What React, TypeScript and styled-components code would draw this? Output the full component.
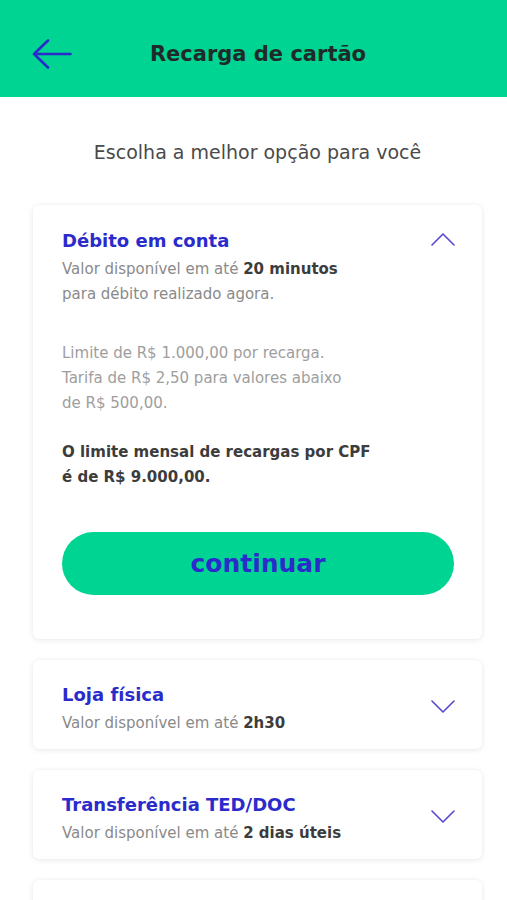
import styled, { createGlobalStyle } from 'styled-components';

const GREEN = '#00d492';
const BLUE = '#2b2bcc';
const CHEVRON = '#5548d0';

const GlobalStyle = createGlobalStyle`
  html, body { margin: 0; padding: 0; background: #ffffff; }
  body { font-family: "DejaVu Sans", "Open Sans", sans-serif; }
  * { box-sizing: border-box; }
`;

interface Option {
  title: string;
  lead: string;
  highlight: string;
}

const COLLAPSED: Option[] = [
  { title: 'Loja física', lead: 'Valor disponível em até ', highlight: '2h30' },
  { title: 'Transferência TED/DOC', lead: 'Valor disponível em até ', highlight: '2 dias úteis' },
];

function Chevron({ up }: { up?: boolean }) {
  return (
    <ChevronIcon viewBox="0 0 24 13" width="24" height="13" aria-hidden="true">
      <path
        d={up ? 'M1 12 L12 1 L23 12' : 'M1 1 L12 12 L23 1'}
        fill="none"
        stroke={CHEVRON}
        strokeWidth="1.6"
        strokeLinecap="round"
        strokeLinejoin="round"
      />
    </ChevronIcon>
  );
}

export default function App() {
  return (
    <>
      <GlobalStyle />
      <Page>
        <Header>
          <BackButton aria-label="Voltar">
            <svg viewBox="0 0 40 30" width="40" height="30" aria-hidden="true">
              <path
                d="M38.5 15 H2 M16 1.5 L2 15 L16 28.5"
                fill="none"
                stroke={BLUE}
                strokeWidth="2.6"
                strokeLinecap="round"
                strokeLinejoin="round"
              />
            </svg>
          </BackButton>
          <HeaderTitle>Recarga de cartão</HeaderTitle>
        </Header>

        <Subtitle>Escolha a melhor opção para você</Subtitle>

        <List>
          <Card $expanded>
            <CardHead>
              <div>
                <OptionTitle>Débito em conta</OptionTitle>
                <Detail>
                  Valor disponível em até <strong>20 minutos</strong>
                  <br />
                  para débito realizado agora.
                </Detail>
              </div>
              <Chevron up />
            </CardHead>

            <Note>
              Limite de R$ 1.000,00 por recarga.
              <br />
              Tarifa de R$ 2,50 para valores abaixo
              <br />
              de R$ 500,00.
            </Note>

            <Strong>
              O limite mensal de recargas por CPF
              <br />
              é de R$ 9.000,00.
            </Strong>

            <ContinueButton>continuar</ContinueButton>
          </Card>

          {COLLAPSED.map(o => (
            <Card key={o.title}>
              <CardHead $center>
                <div>
                  <OptionTitle>{o.title}</OptionTitle>
                  <Detail>
                    {o.lead}
                    <strong>{o.highlight}</strong>
                  </Detail>
                </div>
                <Chevron />
              </CardHead>
            </Card>
          ))}

          <Card />
        </List>
      </Page>
    </>
  );
}

// ─── Styles ──────────────────────────────────────────────────────────────

const Page = styled.div`
  width: 507px;
  height: 900px;
  overflow: hidden;
  background: #ffffff;
`;

const Header = styled.header`
  height: 97px;
  background: ${GREEN};
  display: flex;
  align-items: center;
  position: relative;
  padding: 12px 0 0 32px;
`;

const BackButton = styled.button`
  background: none;
  border: none;
  padding: 0;
  display: flex;
  cursor: pointer;
  margin-top: -1px;
`;

const HeaderTitle = styled.h1`
  position: absolute;
  left: 9px;
  right: 0;
  top: 40px;
  text-align: center;
  margin: 0;
  font-size: 21px;
  line-height: 28px;
  font-weight: 700;
  color: #1f2b29;
  pointer-events: none;
`;

const Subtitle = styled.p`
  margin: 0;
  padding: 41px 0 39px 8px;
  text-align: center;
  font-size: 19px;
  line-height: 28px;
  color: #4a4a4a;
`;

const List = styled.div`
  display: flex;
  flex-direction: column;
  gap: 21px;
  padding: 0 25px 0 33px;
`;

const Card = styled.section<{ $expanded?: boolean }>`
  background: #ffffff;
  border-radius: 6px;
  box-shadow: 0 1px 6px rgba(0, 0, 0, 0.09), 0 0 2px rgba(0, 0, 0, 0.04);
  padding: ${p => (p.$expanded ? '24px 27px 44px 29px' : '23px 27px 13px 29px')};
  min-height: 89px;
  display: flex;
  flex-direction: column;
`;

const CardHead = styled.div<{ $center?: boolean }>`
  display: flex;
  justify-content: space-between;
  align-items: ${p => (p.$center ? 'center' : 'flex-start')};

  & > svg {
    margin-top: ${p => (p.$center ? '0' : '4px')};
    margin-bottom: ${p => (p.$center ? '7px' : '0')};
  }
`;

const ChevronIcon = styled.svg`
  flex-shrink: 0;
`;

const OptionTitle = styled.h2`
  margin: 0 0 4px;
  font-size: 18px;
  line-height: 24px;
  font-weight: 700;
  color: ${BLUE};
`;

const Detail = styled.p`
  margin: 0;
  font-size: 15px;
  line-height: 25px;
  color: #8a8a8a;

  & strong {
    font-weight: 700;
    color: #3c3c3c;
  }
`;

const Note = styled.p`
  margin: 34px 0 0;
  font-size: 15px;
  line-height: 25px;
  color: #9e9e9e;
`;

const Strong = styled.p`
  margin: 24px 0 0;
  font-size: 15px;
  line-height: 25px;
  font-weight: 700;
  color: #3c3c3c;
`;

const ContinueButton = styled.button`
  margin-top: 42px;
  width: 392px;
  height: 63px;
  border: none;
  border-radius: 32px;
  background: ${GREEN};
  color: ${BLUE};
  font-family: inherit;
  font-size: 25px;
  font-weight: 700;
  cursor: pointer;
`;
